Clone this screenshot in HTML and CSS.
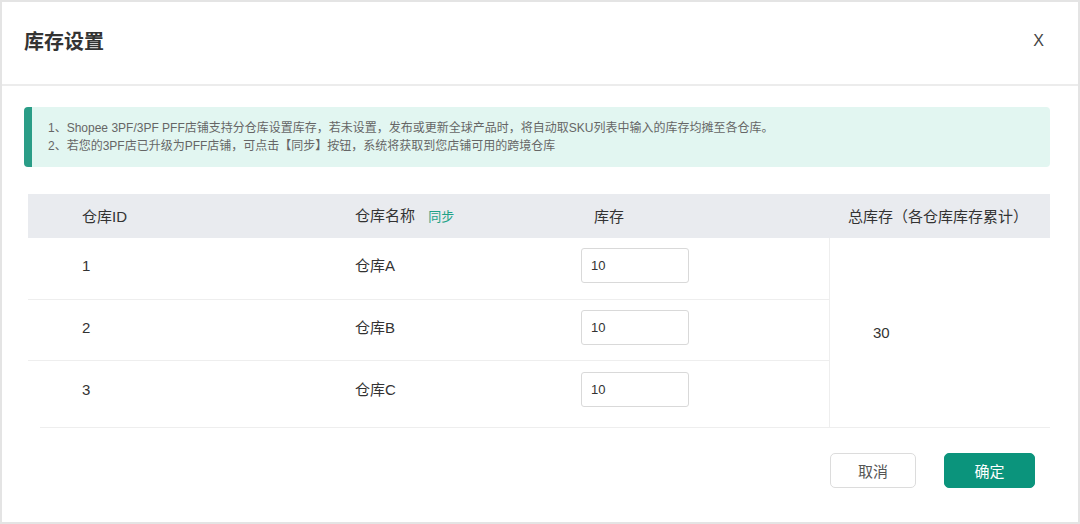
FILE: index.html
```html
<!DOCTYPE html>
<html lang="zh-CN">
<head>
    <meta charset="UTF-8">
    <meta name="viewport" content="width=device-width, initial-scale=1.0">
    <title>库存设置</title>
    <link rel="stylesheet" href="styles.css">
</head>
<body>
    <div class="dialog">
        <div class="dialog-header">
            <h2>库存设置</h2>
            <span class="close">X</span>
        </div>
        <div class="dialog-body">
            <div class="notice">
                <p>1、Shopee 3PF/3PF PFF店铺支持分仓库设置库存，若未设置，发布或更新全球产品时，将自动取SKU列表中输入的库存均摊至各仓库。</p>
                <p>2、若您的3PF店已升级为PFF店铺，可点击【同步】按钮，系统将获取到您店铺可用的跨境仓库</p>
            </div>
            <table class="stock-table">
                <colgroup>
                    <col class="w-id">
                    <col class="w-name">
                    <col class="w-stock">
                    <col class="w-total">
                </colgroup>
                <thead>
                    <tr>
                        <th class="col-id">仓库ID</th>
                        <th class="col-name">仓库名称 <a class="sync">同步</a></th>
                        <th class="col-stock">库存</th>
                        <th class="col-total">总库存（各仓库库存累计）</th>
                    </tr>
                </thead>
                <tbody>
                    <tr class="row-1">
                        <td>1</td>
                        <td>仓库A</td>
                        <td><input type="text" value="10"></td>
                        <td class="total" rowspan="3">30</td>
                    </tr>
                    <tr class="row-2">
                        <td>2</td>
                        <td>仓库B</td>
                        <td><input type="text" value="10"></td>
                    </tr>
                    <tr class="row-3">
                        <td>3</td>
                        <td>仓库C</td>
                        <td><input type="text" value="10"></td>
                    </tr>
                </tbody>
            </table>
            <div class="table-end"></div>
            <div class="actions">
                <button class="btn">取消</button>
                <button class="btn btn-primary">确定</button>
            </div>
        </div>
    </div>
</body>
</html>
```

FILE: styles.css
```css
body {
    font-family: "Liberation Sans", "Noto Sans CJK SC", sans-serif;
    margin: 0;
    background: #fff;
    color: #333;
}
.dialog {
    width: 1080px;
    height: 524px;
    box-sizing: border-box;
    border: 2px solid #e4e4e4;
    background: #fff;
    overflow: hidden;
}
.dialog-header {
    height: 82px;
    border-bottom: 2px solid #ececec;
    display: flex;
    align-items: center;
    justify-content: space-between;
    padding: 0 34px 0 22px;
}
.dialog-header h2 {
    margin: 0 0 2px 0;
    font-size: 20px;
    font-weight: bold;
    color: #333;
    line-height: 28px;
}
.close {
    font-size: 16px;
    color: #444;
    margin-bottom: 4px;
}
.dialog-body {
    padding-top: 21px;
}
.notice {
    margin-left: 22px;
    width: 1026px;
    box-sizing: border-box;
    height: 60px;
    padding: 12px 0 0 16px;
    background: #e2f6f1;
    border-left: 8px solid #2a9d87;
    border-radius: 4px;
}
.notice p {
    margin: 0;
    font-size: 12px;
    line-height: 18px;
    color: #666;
}
.stock-table {
    margin: 27px 0 0 26px;
    width: 1022px;
    border-collapse: separate;
    border-spacing: 0;
    font-size: 15px;
    table-layout: fixed;
}
.w-id { width: 274px; }
.w-name { width: 226px; }
.w-stock { width: 301px; }
.w-total { width: 221px; }
.stock-table th {
    background: #e9ebef;
    height: 43px;
    padding: 0;
    font-weight: normal;
    text-align: left;
    line-height: 43px;
    color: #333;
    white-space: nowrap;
}
.stock-table th.col-id { padding-left: 54px; }
.stock-table th.col-name { padding-left: 53px; }
.stock-table th.col-stock { padding-left: 66px; }
.stock-table th.col-total { padding-left: 19px; }
.sync {
    color: #20a287;
    font-size: 13px;
    margin-left: 9px;
    cursor: pointer;
}
.stock-table td {
    padding: 10px 0 16px 53px;
    line-height: 35px;
    vertical-align: top;
    border-bottom: 1px solid #eeeeee;
}
.stock-table td:first-child {
    padding-left: 54px;
}
.stock-table .row-2 td {
    padding-bottom: 15px;
}
.stock-table .row-3 td {
    padding-top: 11px;
    padding-bottom: 20px;
    border-bottom: none;
}
.stock-table td.total {
    padding: 0 0 0 43px;
    vertical-align: middle;
    border-left: 1px solid #eeeeee;
    border-bottom: none;
}
.stock-table input {
    width: 108px;
    height: 35px;
    box-sizing: border-box;
    border: 1px solid #d9d9d9;
    border-radius: 3px;
    padding: 0 0 0 9px;
    font-family: "Liberation Sans", sans-serif;
    font-size: 13px;
    color: #333;
    vertical-align: top;
}
.table-end {
    margin-left: 38px;
    width: 1010px;
    height: 1px;
    background: #eeeeee;
}
.actions {
    display: flex;
    justify-content: flex-end;
    gap: 28px;
    padding-right: 43px;
    margin-top: 25px;
}
.btn {
    height: 35px;
    width: 86px;
    border: 1px solid #dcdcdc;
    border-radius: 5px;
    background: #fff;
    font-family: "Liberation Sans", "Noto Sans CJK SC", sans-serif;
    font-size: 15px;
    color: #555;
    cursor: pointer;
}
.btn-primary {
    width: 91px;
    background: #0b947c;
    border-color: #0b947c;
    color: #fff;
}
```
